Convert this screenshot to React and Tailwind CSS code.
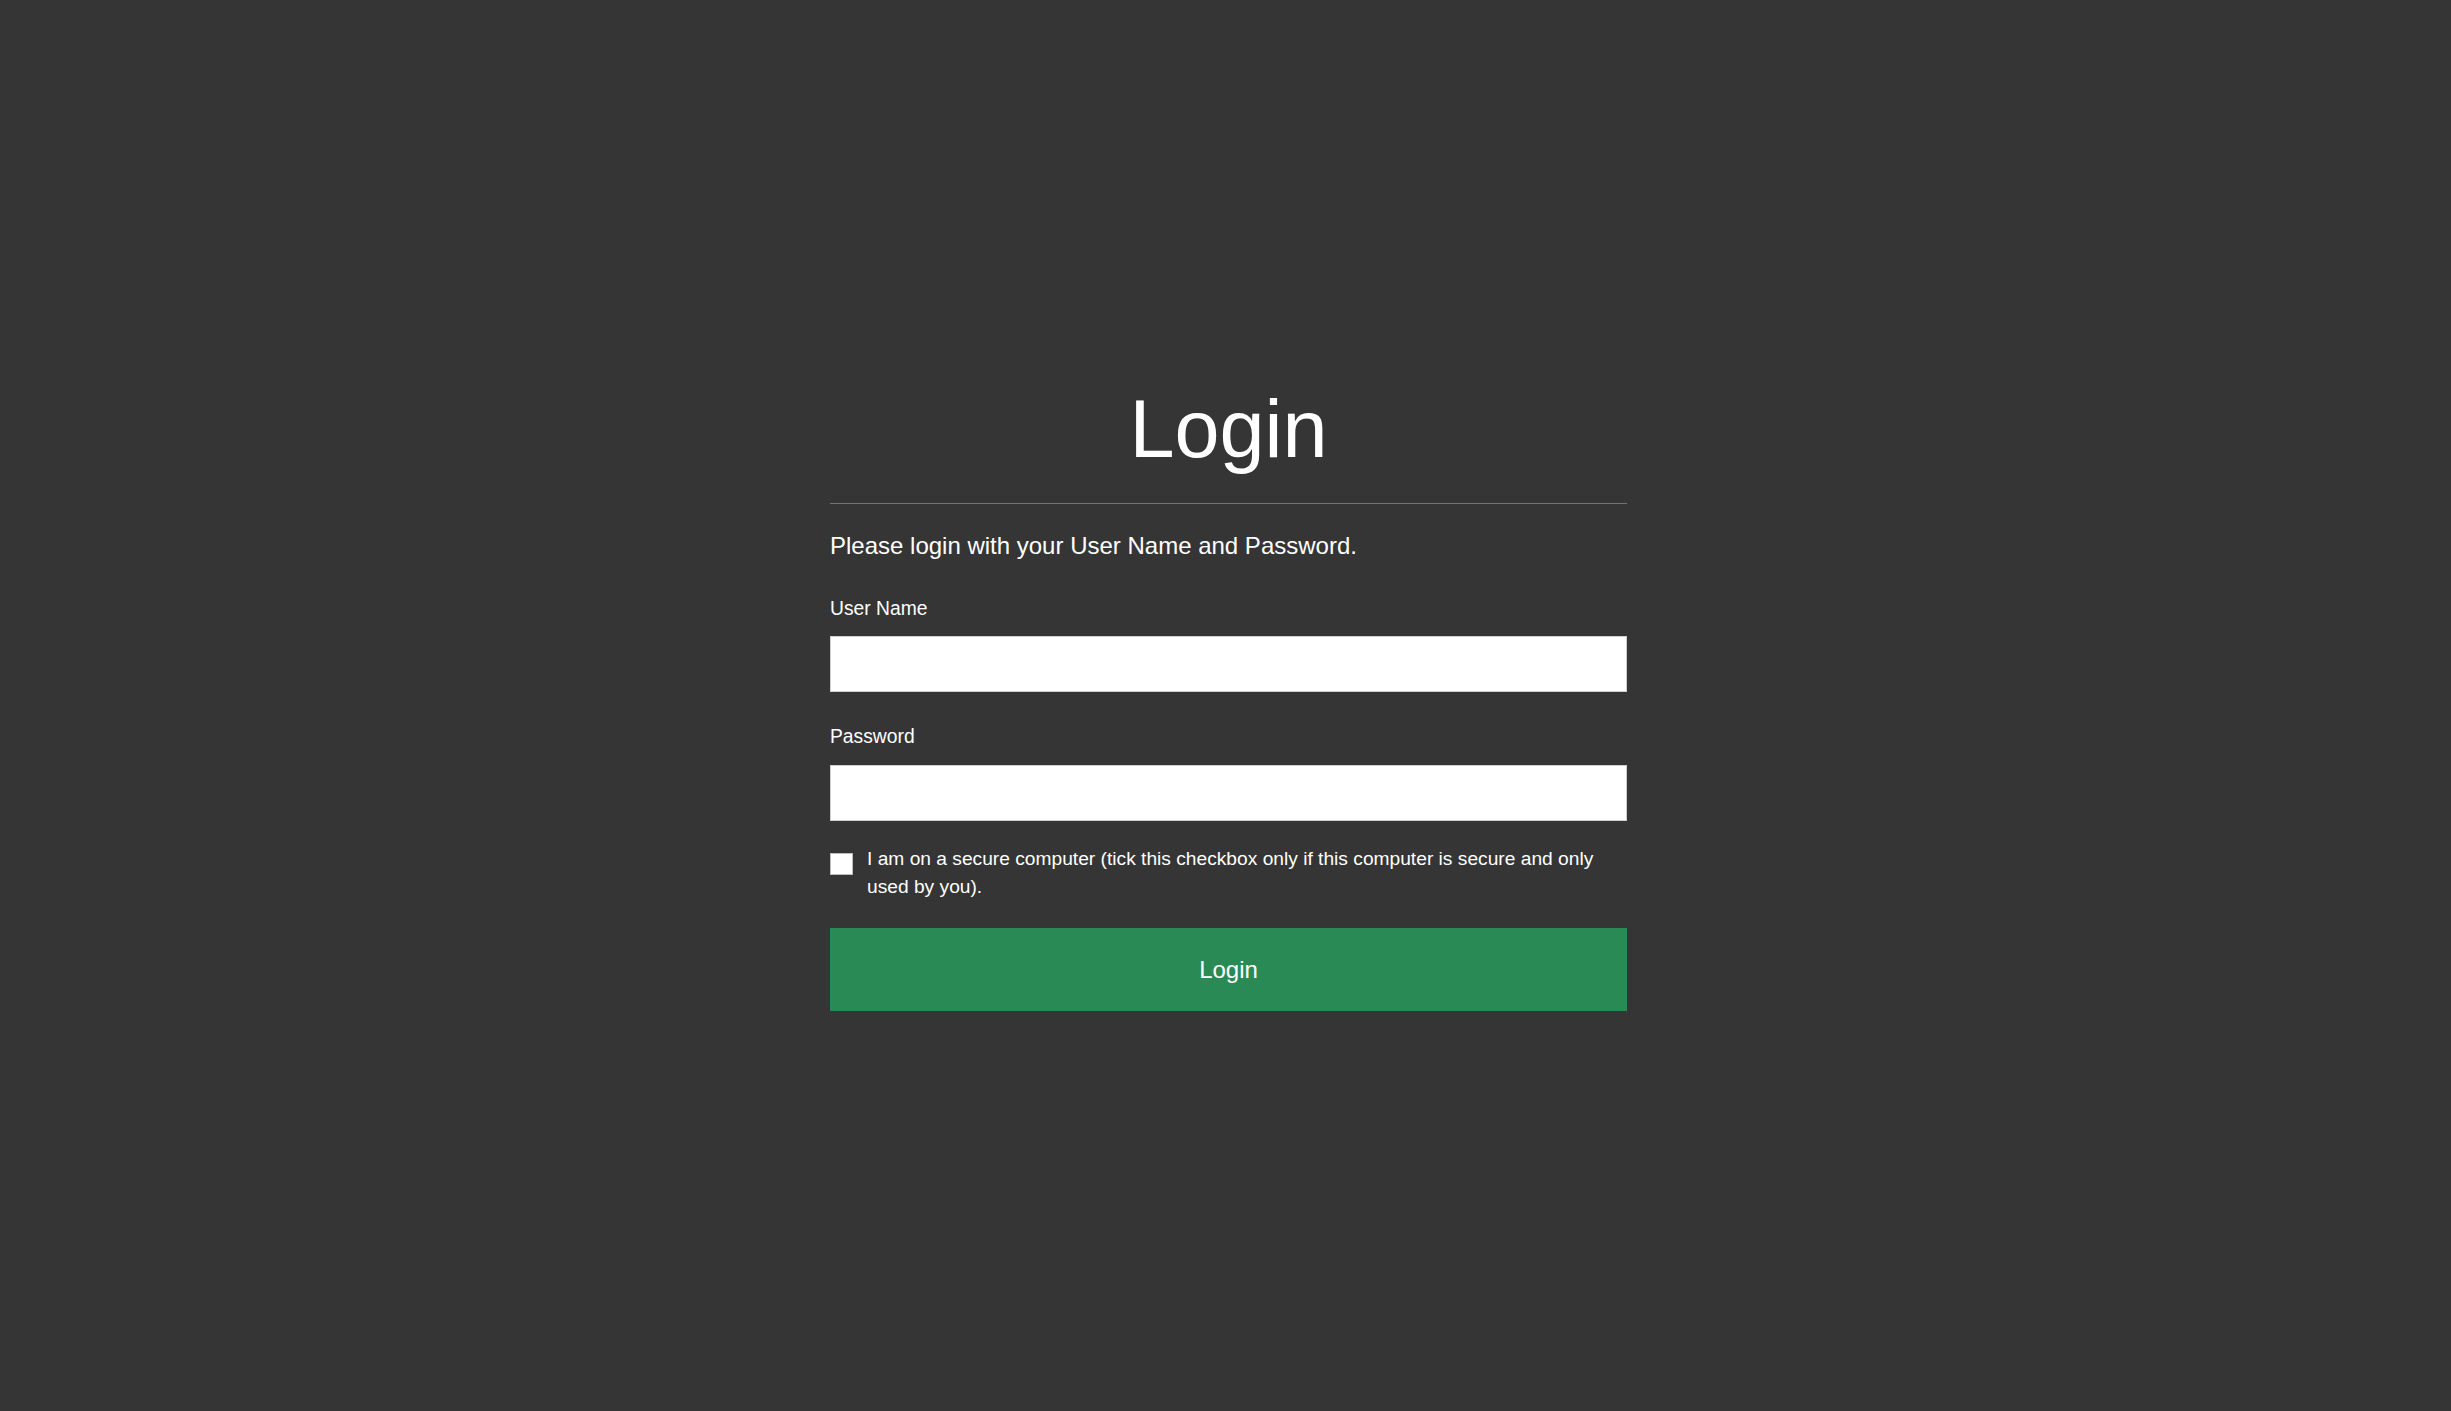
import React from "react";

export default function App() {
  const font = { fontFamily: '"Liberation Sans", Arial, Helvetica, sans-serif' };
  return (
    <div className="min-h-screen w-full bg-[#353535] flex justify-center pl-[6px]" style={font}>
      <div className="w-[797px] flex flex-col pt-[389px] text-white">
        <h1 className="text-[81px] leading-[81px] text-center font-normal">Login</h1>
        <div className="mt-[33px] h-px w-full bg-[#737373]" />
        <p className="mt-[27px] text-[24px] leading-[30px]">
          Please login with your User Name and Password.
        </p>
        <label className="mt-[36px] text-[19.3px] leading-[24px]">User Name</label>
        <input
          type="text"
          className="mt-[15px] h-[56px] w-full bg-white border border-[#cfcfcf] outline-none px-3 text-black"
        />
        <label className="mt-[33px] text-[19.3px] leading-[24px]">Password</label>
        <input
          type="password"
          className="mt-[16px] h-[56px] w-full bg-white border border-[#cfcfcf] outline-none px-3 text-black"
        />
        <div className="mt-[24px] flex items-start">
          <input
            type="checkbox"
            className="appearance-none mt-[8px] w-[23px] h-[22px] shrink-0 bg-white border border-[#bdbdbd] rounded-none"
          />
          <span className="ml-[14px] text-[19.2px] leading-[28px]">
            I am on a secure computer (tick this checkbox only if this computer is secure and only used by you).
          </span>
        </div>
        <button className="mt-[27px] h-[83px] w-full bg-[#298a55] text-white text-[24px] leading-[30px]">
          Login
        </button>
      </div>
    </div>
  );
}
